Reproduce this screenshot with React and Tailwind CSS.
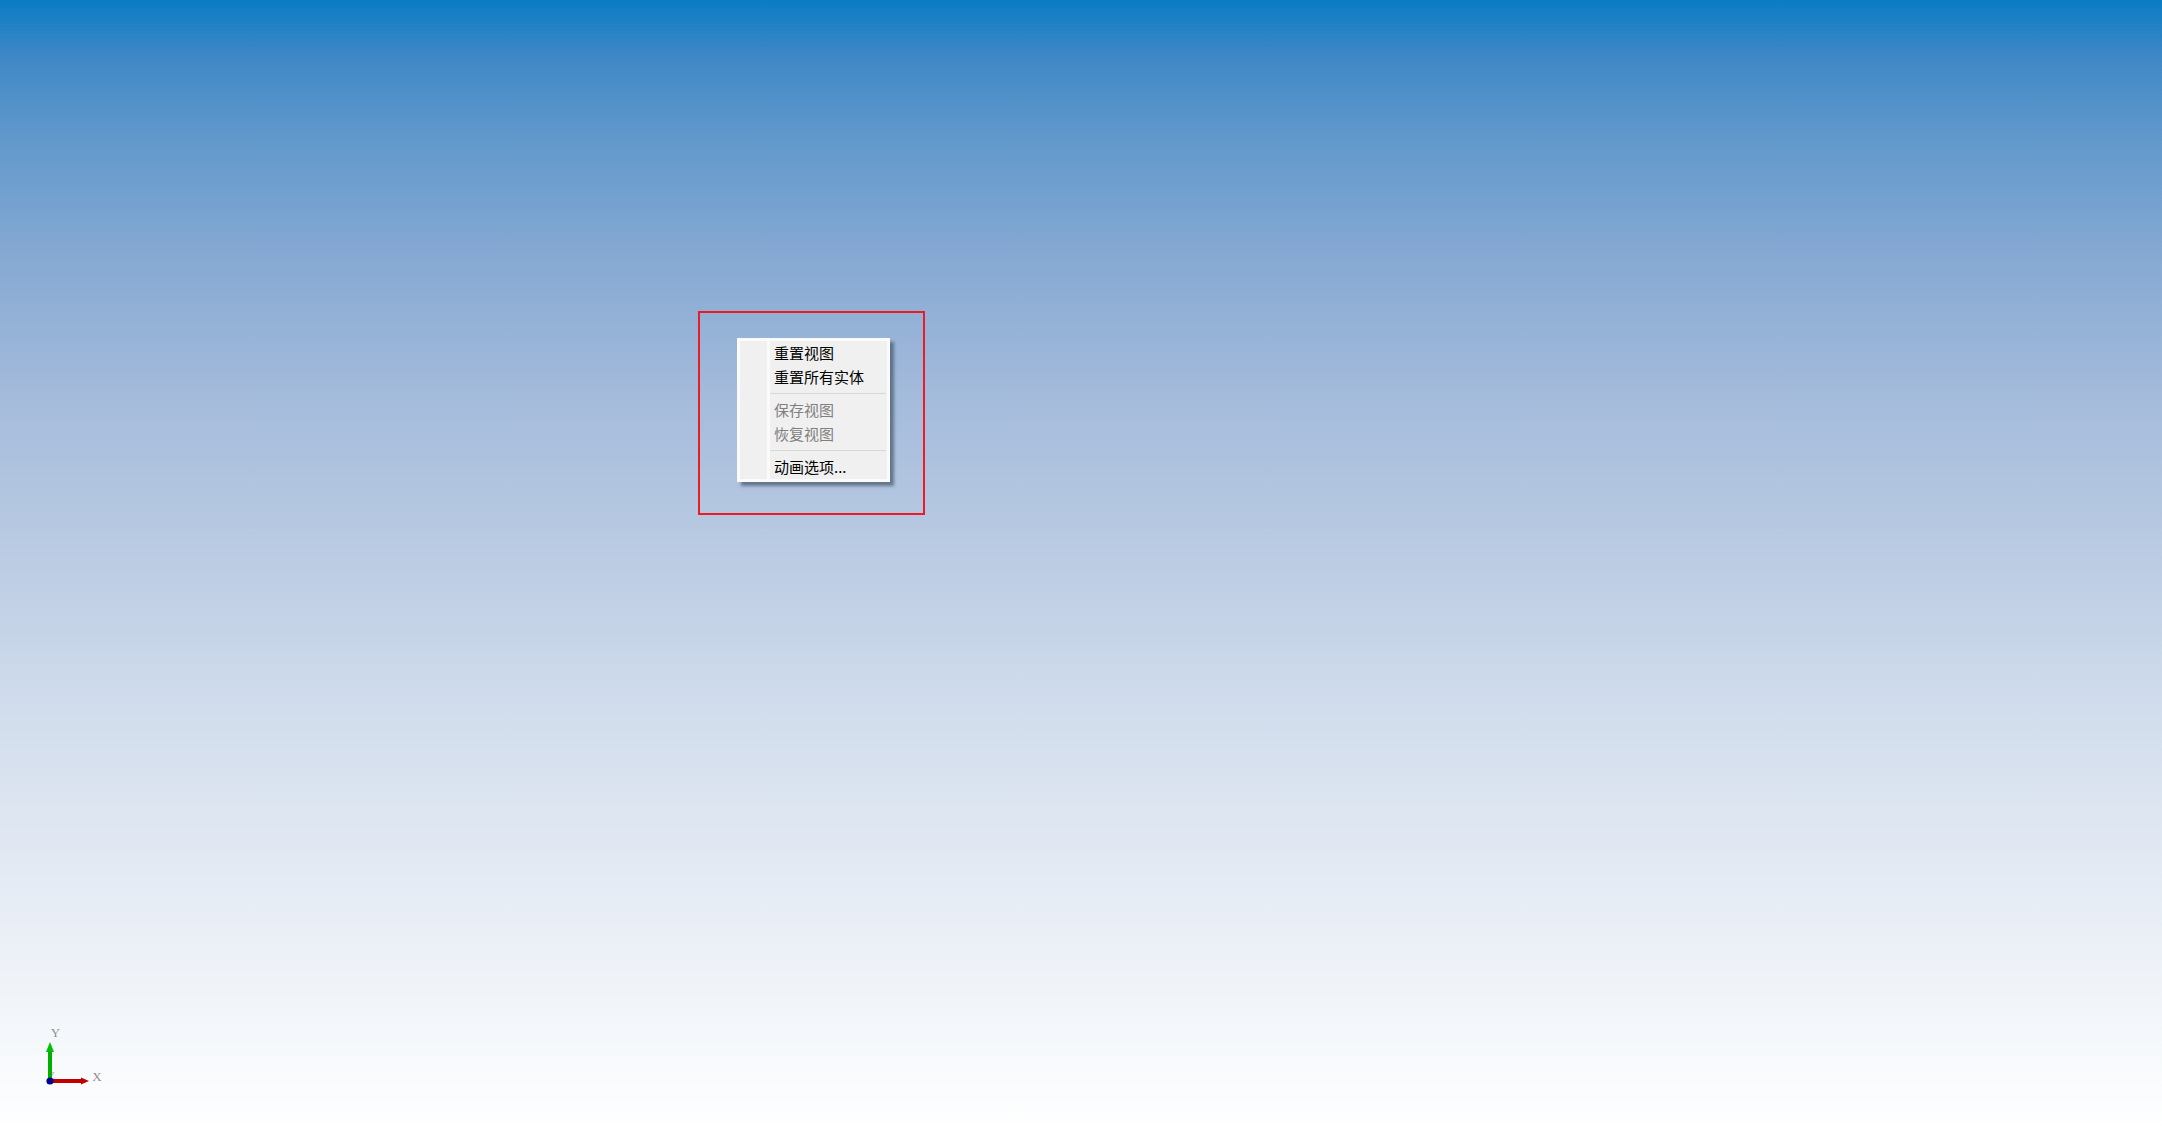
export default function App() {
  const font = { fontFamily: '"Noto Sans CJK SC", sans-serif' };
  const Item = ({ label, disabled, className = "" }) => (
    <div className={`flex items-center h-[24px] pl-[4px] text-[15px] leading-[24px] whitespace-nowrap ${disabled ? "text-[#808080]" : "text-black"} ${className}`}>
      {label}
    </div>
  );
  const Sep = () => <div className="h-px bg-[#d7d7d7] mr-[1px]" />;
  return (
    <div className="relative w-[2162px] h-[1131px] overflow-hidden bg-[linear-gradient(to_bottom,#0a7cc4_0%,#3f88c6_5%,#6098cb_12%,#84a8d2_22%,#a4bbdb_35%,#b9cae2_48%,#d0dcec_62%,#e5ebf4_78%,#f5f8fb_92%,#ffffff_100%)]">
      <div className="absolute left-[698px] top-[311px] w-[227px] h-[204px] border-2 border-[#ed1c24]" />

      <div
        className="absolute left-[737px] top-[338px] w-[153px] h-[144px] border-[3px] border-[#fbfbfb] bg-[#f0f0f0] flex shadow-[4px_4px_3px_rgba(70,85,105,0.7)]"
        style={font}
      >
        <div className="w-[27px] shrink-0" />
        <div className="w-[3px] shrink-0 bg-[#fbfbfb]" />
        <div className="flex-1 flex flex-col">
          <Item label="重置视图" />
          <Item label="重置所有实体" />
          <div className="mt-[4px]"><Sep /></div>
          <Item label="保存视图" disabled className="mt-[4px]" />
          <Item label="恢复视图" disabled />
          <div className="mt-[4px]"><Sep /></div>
          <Item label="动画选项..." className="mt-[4px]" />
        </div>
      </div>

      <svg className="absolute left-[30px] top-[1010px]" width="90" height="90" viewBox="0 0 90 90">
        <text x="22" y="69" fontSize="10" fill="#b9b9b9" textAnchor="middle" fontFamily="Liberation Serif, serif">Z</text>
        <rect x="18" y="42" width="4" height="29" fill="#00b000" />
        <path d="M20 32 L16 42 H24 Z" fill="#00c000" />
        <rect x="20" y="69" width="32" height="4" fill="#c00000" />
        <path d="M59 71 L51 67.5 V74.5 Z" fill="#c00000" />
        <circle cx="20" cy="71" r="3.6" fill="#000090" />
        <text x="25.5" y="27" fontSize="13" fill="#8f8f8f" textAnchor="middle" fontFamily="Liberation Serif, serif">Y</text>
        <text x="67" y="71" fontSize="13" fill="#8f8f8f" textAnchor="middle" fontFamily="Liberation Serif, serif">X</text>
      </svg>
    </div>
  );
}
